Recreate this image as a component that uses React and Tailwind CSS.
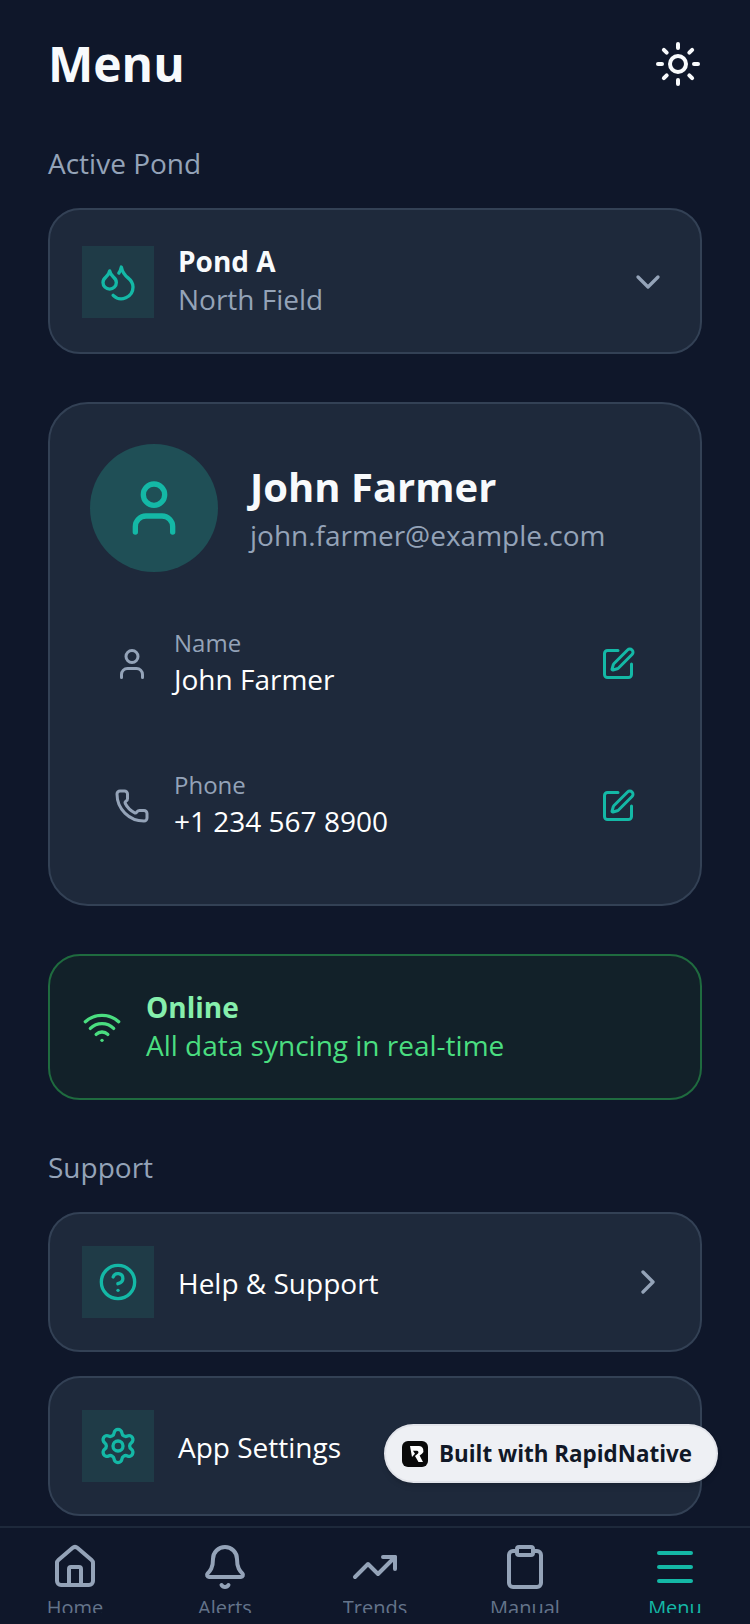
import React from "react";
import {
  Sun,
  Droplets,
  ChevronDown,
  ChevronRight,
  User,
  SquarePen,
  Phone,
  Wifi,
  CircleHelp,
  Settings,
  House,
  Bell,
  TrendingUp,
  Clipboard,
  Menu,
} from "lucide-react";

const tabs = [
  { label: "Home", icon: House },
  { label: "Alerts", icon: Bell },
  { label: "Trends", icon: TrendingUp },
  { label: "Manual", icon: Clipboard },
  { label: "Menu", icon: Menu, active: true },
];

const IconBox = ({ icon: Icon, size = 40, className = "" }) => (
  <div className={`w-[72px] h-[72px] shrink-0 flex items-center justify-center bg-[#1f3b47] ${className}`}>
    <Icon size={size} className="text-[#14b8a6]" />
  </div>
);

const DetailRow = ({ icon: Icon, label, value }) => (
  <div className="h-[114px] flex items-center pl-6 pr-6">
    <Icon size={36} className="text-[#94a3b8] shrink-0" />
    <div className="ml-6 flex-1 pb-[5px]">
      <p className="text-[24px] leading-[36px] text-[#94a3b8]">{label}</p>
      <p className="text-[28px] leading-[37px] text-white">{value}</p>
    </div>
    <SquarePen size={36} className="text-[#14b8a6]" />
  </div>
);

const LinkCard = ({ icon, label }) => (
  <div className="flex items-center p-8 rounded-[32px] border-2 border-[#334155] bg-[#1e293b]">
    <IconBox icon={icon} />
    <p className="ml-6 flex-1 pt-[2px] text-[28px] leading-[40px] text-white">{label}</p>
    <ChevronRight size={40} className="text-[#94a3b8]" />
  </div>
);

const App = () => {
  return (
    <div className="relative w-[750px] h-[1624px] overflow-hidden flex flex-col bg-[#0f172a] font-['Open_Sans',sans-serif]">
      <main className="flex-1 min-h-0 overflow-hidden px-12">
        <div className="mt-8 h-16 flex items-center justify-between">
          <h1 className="text-[48px] leading-[64px] font-bold text-[#f8fafc]">Menu</h1>
          <Sun size={48} className="text-[#f8fafc]" />
        </div>

        <p className="mt-[47px] mb-[25px] text-[28px] leading-[40px] text-[#94a3b8]">Active Pond</p>
        <div className="flex items-center p-8 rounded-[32px] border-2 border-[#334155] bg-[#1e293b]">
          <IconBox icon={Droplets} className="mt-[2px]" />
          <div className="ml-6 flex-1 pb-[1px]">
            <p className="text-[28px] leading-[38px] font-bold text-[#f8fafc]">Pond A</p>
            <p className="text-[28px] leading-[39px] text-[#94a3b8]">North Field</p>
          </div>
          <ChevronDown size={40} className="mt-[2px] text-[#94a3b8]" />
        </div>

        <div className="mt-[48px] p-10 pb-[41px] rounded-[40px] border-2 border-[#334155] bg-[#1e293b]">
          <div className="flex items-center mb-[35px]">
            <div className="w-32 h-32 rounded-full shrink-0 flex items-center justify-center bg-[#1f4f56]">
              <User size={64} className="text-[#14b8a6]" />
            </div>
            <div className="ml-8 pb-[2px]">
              <p className="text-[40px] leading-[56px] font-bold text-[#f8fafc]">John Farmer</p>
              <p className="text-[28px] leading-[40px] text-[#94a3b8]">john.farmer@example.com</p>
            </div>
          </div>
          <div className="flex flex-col gap-7">
            <DetailRow icon={User} label="Name" value="John Farmer" />
            <DetailRow icon={Phone} label="Phone" value="+1 234 567 8900" />
          </div>
        </div>

        <div className="mt-[48px] flex items-center p-8 rounded-[32px] border-2 border-[#1f6b3f] bg-[#122129]">
          <Wifi size={40} className="text-[#4ade80] shrink-0" />
          <div className="ml-6 pb-[1px]">
            <p className="text-[28px] leading-[38px] font-bold text-[#86efac]">Online</p>
            <p className="text-[28px] leading-[39px] text-[#4ade80]">All data syncing in real-time</p>
          </div>
        </div>

        <p className="mt-[47px] mb-[25px] text-[28px] leading-[40px] text-[#94a3b8]">Support</p>
        <div className="flex flex-col gap-6">
          <LinkCard icon={CircleHelp} label="Help & Support" />
          <LinkCard icon={Settings} label="App Settings" />
        </div>
      </main>

      <nav className="shrink-0 h-[98px] border-t-2 border-[#1e293b] bg-[#0f172a] flex">
        {tabs.map(({ label, icon: Icon, active }) => (
          <div key={label} className="w-[150px] flex flex-col items-center pt-[15px]">
            <Icon size={48} className={active ? "text-[#14b8a6]" : "text-[#94a3b8]"} />
            <div className="mt-[1px] h-[21px] overflow-hidden">
              <p className={`text-[20px] leading-[32px] ${active ? "text-[#14b8a6]" : "text-[#64748b]"}`}>{label}</p>
            </div>
          </div>
        ))}
      </nav>

      <div className="absolute left-[384px] top-[1424px] w-[334px] h-[59px] rounded-full border-2 border-[#e2e4ea] bg-[#eef0f4] shadow-md flex items-center pl-[16px]">
        <svg width="26" height="26" viewBox="0 0 26 26">
          <rect width="26" height="26" rx="6" fill="#0a0a0a" />
          <path d="M8 5h9a4.5 4.5 0 0 1 3 7.8l-2.4 1.6L21 21h-4.5l-3.5-6 3-2.5a1.6 1.6 0 0 0-1-2.7H11l2 3-3 3.2z" fill="#fff" />
        </svg>
        <span className="ml-[11px] text-[22.4px] font-bold text-[#111827]">Built with RapidNative</span>
      </div>
    </div>
  );
};

export default App;
